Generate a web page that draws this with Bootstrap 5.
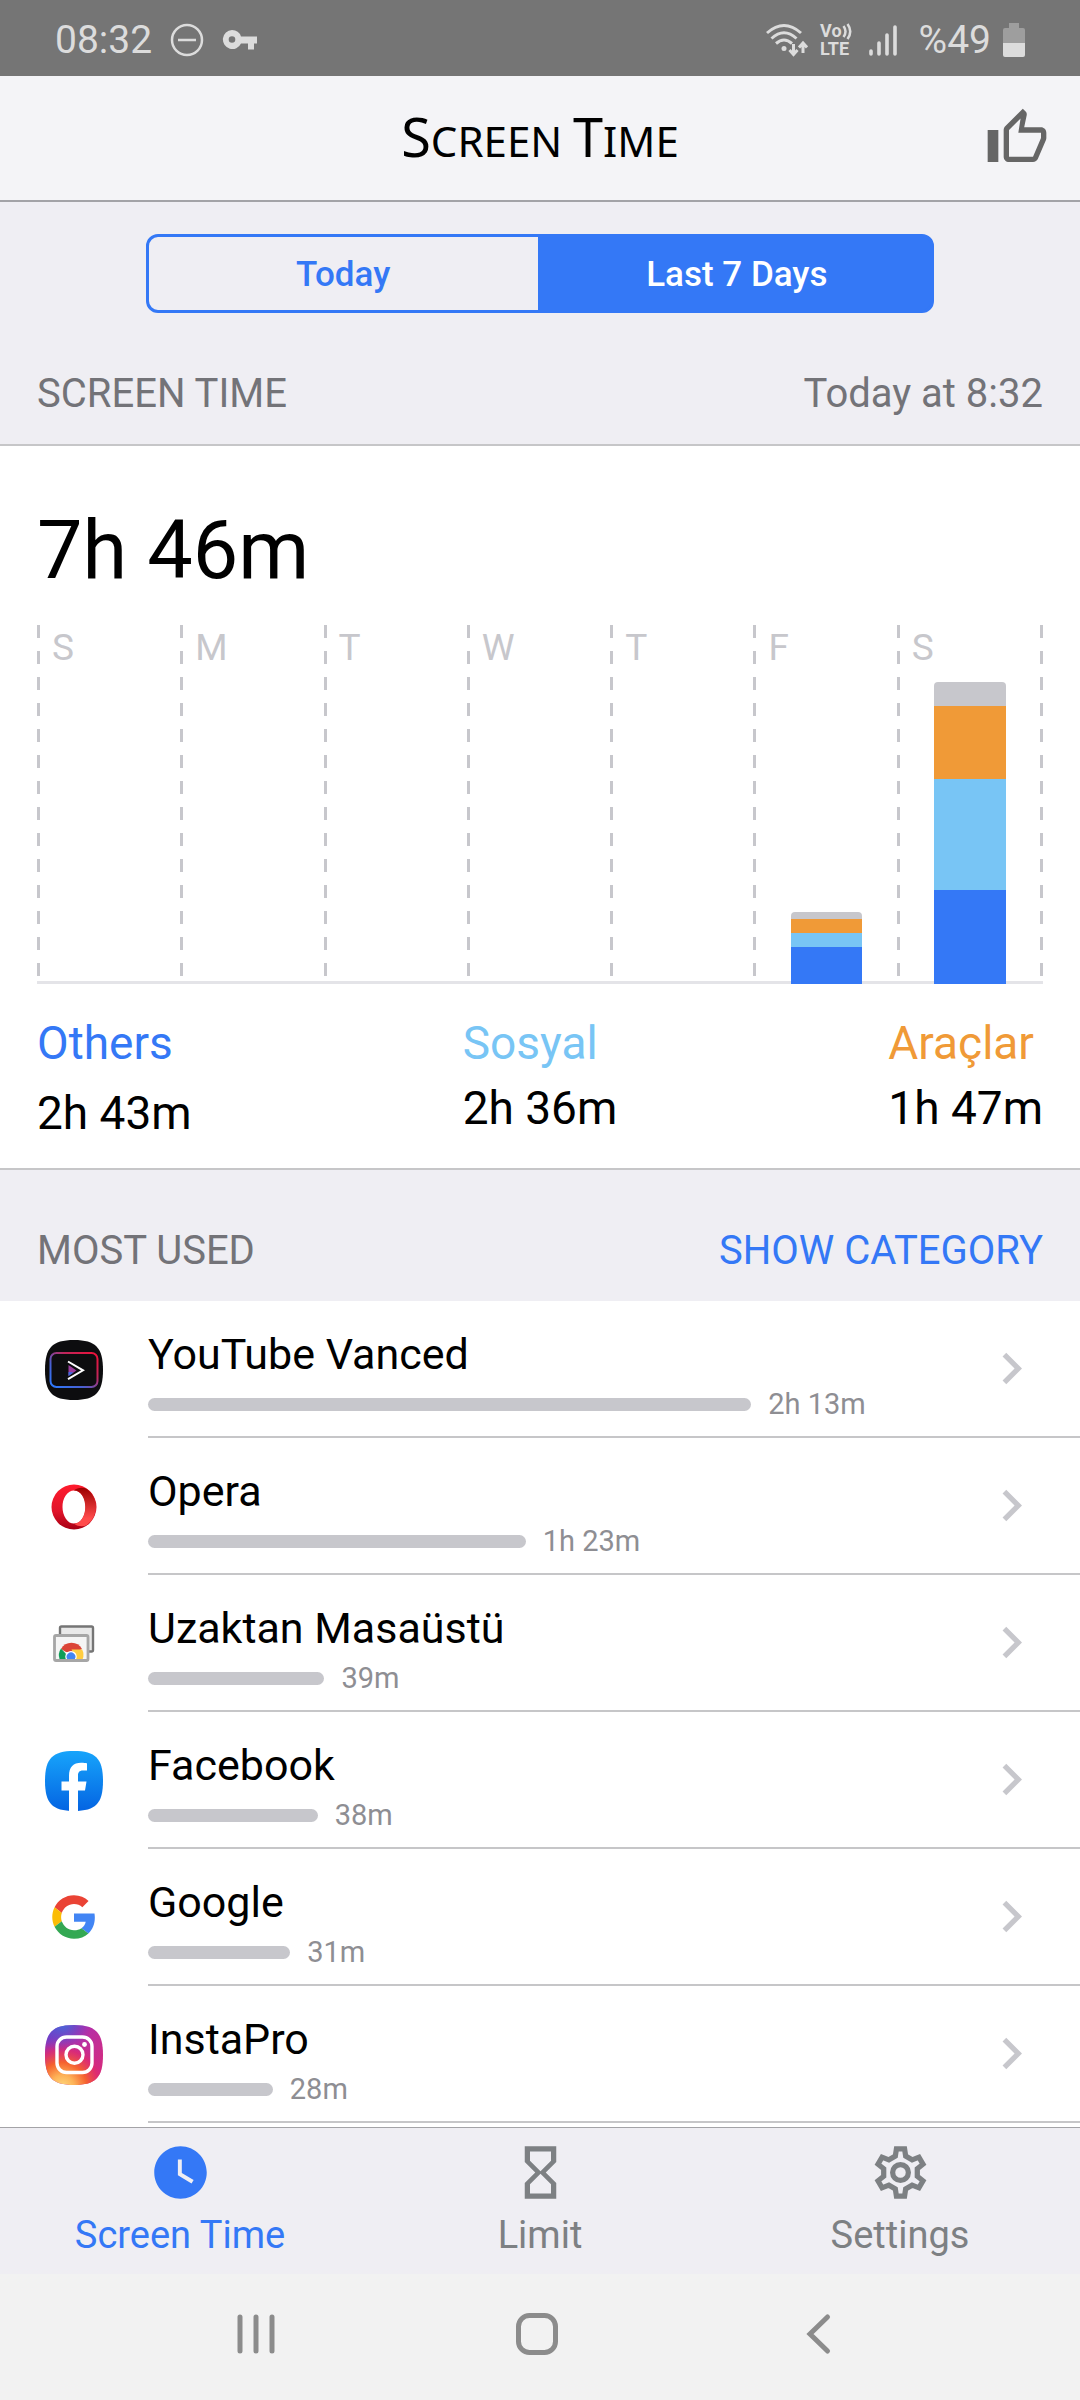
<!DOCTYPE html>
<html lang="en">
<head>
<meta charset="utf-8">
<meta name="viewport" content="width=device-width, initial-scale=1">
<title>Screen Time</title>
<link href="https://cdn.jsdelivr.net/npm/bootstrap@5.3.0/dist/css/bootstrap.min.css" rel="stylesheet">
<style>
  :root {
    --accent: #3478f6; --sky: #78c5f5; --amber: #f09a37; --silver: #c7c7cc;
    --page: #efeef3; --line: #c6c6c8; --edge: #a3a3a7; --pad: 37px;
  }
  body { font-family: Roboto, "Noto Sans", sans-serif; background: #fff; color: #000; }
  svg { display: block; flex: none; }
  button { font-family: inherit; }
  .plain-btn { border: 0; background: none; padding: 0; }

  .status-bar { background: #757575; color: #dcdcdc; font-size: 39px; line-height: 72px; padding: 4px 55px 0; }
  .status-left { gap: 18px; }
  .status-right { gap: 12px; }
  .status-signal { margin: 0 10px 0 5px; }
  .volte { font-size: 18px; line-height: 18px; font-weight: 700; }
  .title-bar { background: #f4f4f7; border-bottom: 2px solid var(--edge); min-height: 126px; padding: 0 31px; display: grid; grid-template-columns: 1fr auto 1fr; align-items: center; }
  .app-title { font-family: "Noto Sans", sans-serif; font-size: 42px; line-height: 64px; text-transform: uppercase; grid-column: 2; margin: 0; font-weight: 400; }
  .app-title span { font-size: 54px; }
  .like-btn { color: #666; justify-self: end; }

  .gray-zone { background: var(--page); }
  .range-switch { width: 73%; margin: 0 auto; }
  .range-switch .btn {
    --bs-btn-color: var(--accent); --bs-btn-border-color: var(--accent);
    --bs-btn-active-bg: var(--accent); --bs-btn-active-border-color: var(--accent); --bs-btn-active-color: #fff;
    --bs-btn-hover-bg: transparent; --bs-btn-hover-color: var(--accent); --bs-btn-hover-border-color: var(--accent);
    --bs-btn-border-width: 3px; --bs-btn-border-radius: 12px;
    flex: 1 1 0; font-size: 35px; font-weight: 500; line-height: 71px; padding: 2px 0 0;
  }
  .section-head { padding: 51px var(--pad) 20px; font-size: 40px; line-height: 60px; color: #737378; }
  .section-head h2 { font-size: inherit; line-height: inherit; font-weight: 400; margin: 0; }
  .section-head a { color: var(--accent); text-decoration: none; }

  .summary { border-top: 2px solid var(--line); border-bottom: 2px solid var(--line); padding: 55px var(--pad) 25px; }
  .total { font-size: 81px; line-height: 100px; margin: 0 0 24px; }
  .chart { height: 359px; border-bottom: 3px solid #e4e4e8; }
  .day, .chart-end {
    background: repeating-linear-gradient(var(--silver) 0 13px, transparent 13px 26px) 0 0 / 3px 351px no-repeat;
  }
  .chart-end { width: 3px; }
  .day { flex: 1 1 0; padding-left: 3px; font-size: 37px; line-height: 46px; color: var(--silver); }
  .day-name { padding-left: 12px; }
  .stack { width: 51%; margin: 0 auto -3px; border-radius: 4px 4px 0 0; overflow: hidden; }
  .seg-rest { background: var(--silver); }
  .seg-tools { background: var(--amber); }
  .seg-social { background: var(--sky); }
  .seg-others { background: var(--accent); }
  .name-others { color: var(--accent); }
  .name-social { color: var(--sky); }
  .name-tools { color: var(--amber); }
  .legend { margin-top: 29px; font-size: 46px; line-height: 60px; }
  .legend-item { display: grid; row-gap: 5px; align-content: start; }
  .legend-top { row-gap: 10px; }

  .app-row { color: #000; text-decoration: none; padding-left: 45px; }
  .app-body { margin-left: 45px; border-bottom: 2px solid var(--line); padding-right: var(--pad); }
  .app-info { padding: 28px 0 17px; }
  .app-name { font-size: 43px; line-height: 50px; margin-bottom: 10px; }
  .usage { font-size: 29px; line-height: 30px; color: #8e8e93; gap: 17px; }
  .usage-bar { height: 13px; border-radius: 7px; background: var(--silver); }
  .chev { color: var(--silver); }

  .tab-bar { background: var(--page); border-top: 1px solid var(--edge); }
  .tab-bar a { flex: 1 1 0; color: #7d8083; text-decoration: none; font-size: 38px; line-height: 44px; padding: 13px 0 17px; gap: 9px; }
  .tab-bar a.current { color: var(--accent); }
  .system-nav { background: #f2f2f2; padding: 38px 122px 44px 115px; }
  .system-nav button { flex: 1 1 0; display: flex; justify-content: center; }
</style>
<script src="https://cdn.jsdelivr.net/npm/bootstrap@5.3.0/dist/js/bootstrap.bundle.min.js"></script>
</head>
<body class="d-flex flex-column min-vh-100">

<div class="status-bar d-flex align-items-center justify-content-between">
  <div class="status-left d-flex align-items-center">
    <span>08:32</span>
    <svg width="34" height="34" viewBox="0 0 34 34" fill="none" stroke="currentColor" stroke-width="2.5"><circle cx="17" cy="17" r="15"/><path d="M8 17h18"/></svg>
    <svg width="36" height="22" viewBox="0 0 36 22"><path fill="currentColor" fill-rule="evenodd" d="M10 1a9.5 9.5 0 0 1 9 6.500h16v7h-3v6h-6v-6h-7A9.500 9.500 0 1 1 10 1zm0 6.200a3.300 3.300 0 1 0 0 6.600 3.300 3.300 0 0 0 0-6.600z"/></svg>
  </div>
  <div class="status-right d-flex align-items-center">
    <svg width="42" height="34" viewBox="0 0 42 34" fill="none" stroke="currentColor" stroke-width="3"><path d="M1 10Q18-5 35 10M5.500 15.500Q18 4 30.500 15.500M10 20.500Q18 13.500 26 20.500"/><circle cx="18" cy="25.500" r="2.500" fill="currentColor" stroke="none"/><path d="M27.500 21v10M23.500 27l4 4.500 4-4.500M37 30V20M33 24.500l4-4.500 4 4.500"/></svg>
    <div class="volte">
      <div class="d-flex"><span>Vo</span><svg width="10" height="18" viewBox="0 0 10 18"><path d="M1.500 4q4 5.500 0 11M5.500 2q5.500 7.500 0 15" fill="none" stroke="currentColor" stroke-width="2.500"/></svg></div>
      <div>LTE</div>
    </div>
    <svg class="status-signal" width="28" height="32" viewBox="0 0 28 32" stroke="currentColor" stroke-width="3.600" stroke-linecap="round"><path d="M2 27v3M10 19v11M18 11v19M26 3v27"/></svg>
    <span>%49</span>
    <svg width="22" height="34" viewBox="0 0 22 34" fill="currentColor"><path opacity=".4" d="M6 0h10v5h4q2 0 2 2v13H0V7q0-2 2-2h4z"/><path d="M0 20h22v12q0 2-2 2H2q-2 0-2-2z"/></svg>
  </div>
</div>

<header class="title-bar">
  <h1 class="app-title"><span>S</span>creen <span>T</span>ime</h1>
  <button type="button" class="plain-btn like-btn" aria-label="Like">
    <svg width="64" height="64" viewBox="0 0 24 24" fill="currentColor"><path d="M9 21h9c.83 0 1.540-.5 1.840-1.220l3.020-7.050c.09-.23.14-.47.14-.73v-2c0-1.100-.9-2-2-2h-6.310l.95-4.570.03-.32c0-.41-.17-.79-.44-1.060L14.170 1 7.580 7.590C7.220 7.950 7 8.450 7 9v10c0 1.100.9 2 2 2zM9 9l4.340-4.340L12.500 10H21v2l-3 7H9V9zM1 9h4v12H1z"/></svg>
  </button>
</header>

<main class="flex-grow-1">
  <div class="gray-zone">
    <div class="pt-4"><div class="pt-2">
      <div class="range-switch btn-group d-flex" role="group" aria-label="Range">
        <button type="button" class="btn">Today</button>
        <button type="button" class="btn active" aria-pressed="true">Last 7 Days</button>
      </div>
    </div></div>
    <div class="section-head d-flex justify-content-between">
      <h2>SCREEN TIME</h2><span>Today at 8:32</span>
    </div>
  </div>

  <section class="summary">
    <p class="total">7h 46m</p>
    <div class="chart d-flex">
      <div class="day"><div class="day-name">S</div></div>
      <div class="day"><div class="day-name">M</div></div>
      <div class="day"><div class="day-name">T</div></div>
      <div class="day"><div class="day-name">W</div></div>
      <div class="day"><div class="day-name">T</div></div>
      <div class="day d-flex flex-column justify-content-between"><div class="day-name">F</div>
        <div class="stack">
          <div class="seg-rest" style="height:7px"></div><div class="seg-tools" style="height:14px"></div><div class="seg-social" style="height:14px"></div><div class="seg-others" style="height:37px"></div>
        </div>
      </div>
      <div class="day d-flex flex-column justify-content-between"><div class="day-name">S</div>
        <div class="stack">
          <div class="seg-rest" style="height:24px"></div><div class="seg-tools" style="height:73px"></div><div class="seg-social" style="height:111px"></div><div class="seg-others" style="height:94px"></div>
        </div>
      </div>
      <div class="chart-end"></div>
    </div>
    <div class="legend d-flex justify-content-between">
      <div class="legend-item legend-top"><span class="name-others">Others</span><span>2h 43m</span></div>
      <div class="legend-item"><span class="name-social">Sosyal</span><span>2h 36m</span></div>
      <div class="legend-item"><span class="name-tools">Araçlar</span><span>1h 47m</span></div>
    </div>
  </section>

  <div class="gray-zone section-head d-flex justify-content-between">
    <h2>MOST USED</h2><a href="#">SHOW CATEGORY</a>
  </div>

  <nav class="pb-1" aria-label="Most used apps">
    <a href="#" class="app-row d-flex align-items-center">
      <svg width="58" height="60" viewBox="0 0 58 60"><defs><linearGradient id="vg" x1="0" y1="1" x2="1" y2="0"><stop offset="0" stop-color="#2b7bff"/><stop offset=".35" stop-color="#4a5fd0"/><stop offset=".65" stop-color="#c0265a"/><stop offset="1" stop-color="#f01038"/></linearGradient></defs><path fill="#0d0d0f" d="M0 30C0 8 7 0 29 0s29 8 29 30-7 30-29 30S0 52 0 30z"/><rect x="5.500" y="13" width="47" height="34" rx="6" fill="none" stroke="url(#vg)" stroke-width="2"/><path d="M23.500 25v11l8-5.500z" fill="#9a3c9c"/><path d="M23.500 32v4l5-3.500z" fill="#3d6be0"/><path d="M23 21.500l15 8.800-15 8.800" fill="none" stroke="#fff" stroke-width="2"/></svg>
      <div class="app-body d-flex flex-grow-1 align-items-center">
        <div class="app-info flex-grow-1"><div class="app-name">YouTube Vanced</div>
          <div class="usage d-flex align-items-center"><div class="usage-bar" style="width:72.5%"></div><span>2h 13m</span></div></div>
        <svg class="chev" width="63" height="63" viewBox="0 0 24 24" fill="currentColor"><path d="M10 6 8.590 7.410 13.170 12l-4.580 4.590L10 18l6-6z"/></svg>
      </div>
    </a>
    <a href="#" class="app-row d-flex align-items-center">
      <svg width="58" height="60" viewBox="0 0 58 60"><defs><linearGradient id="o1" x1="0" y1="0" x2="0" y2="1"><stop offset="0" stop-color="#ff1b2d"/><stop offset=".6" stop-color="#e0142a"/><stop offset="1" stop-color="#a70014"/></linearGradient><linearGradient id="o2" x1="0" y1="0" x2="0" y2="1"><stop offset="0" stop-color="#9c0000"/><stop offset=".8" stop-color="#ff4b4b"/></linearGradient></defs><path fill="url(#o1)" fill-rule="evenodd" d="M29 7.500a22.500 22.500 0 1 0 0 45 22.500 22.500 0 0 0 0-45zm0 6a11.500 16.500 0 1 1 0 33 11.500 16.500 0 0 1 0-33z"/><path fill="url(#o2)" d="M29 13.500c3-3 9-3.500 13-1.500a22.500 22.500 0 0 1 0 36c-4 2-10 1.500-13-1.500 15 0 15-33 0-33z"/></svg>
      <div class="app-body d-flex flex-grow-1 align-items-center">
        <div class="app-info flex-grow-1"><div class="app-name">Opera</div>
          <div class="usage d-flex align-items-center"><div class="usage-bar" style="width:45.4%"></div><span>1h 23m</span></div></div>
        <svg class="chev" width="63" height="63" viewBox="0 0 24 24" fill="currentColor"><path d="M10 6 8.590 7.410 13.170 12l-4.580 4.590L10 18l6-6z"/></svg>
      </div>
    </a>
    <a href="#" class="app-row d-flex align-items-center">
      <svg width="58" height="60" viewBox="0 0 58 60"><rect x="15" y="12.500" width="33" height="25" rx="1.500" fill="#e9e9e9" stroke="#757575" stroke-width="2.400"/><rect x="9.500" y="21.500" width="33.500" height="25" rx="1.500" fill="#f5f5f5" stroke="#a6a6a6" stroke-width="2.800"/><path fill="#db4437" d="M16 35a12 12 0 0 1 21 0l-6 3H21z"/><path fill="#0f9d58" d="M16 34.500a12 12 0 0 0-1.500 10.500H21l1-4z"/><path fill="#ffcd40" d="M26.500 35.500h10.700a12 12 0 0 1 .5 9.500H31z"/><path fill="#fff" d="M20.800 45a5.700 5.700 0 1 1 10.400 0z"/><path fill="#4285f4" d="M22.200 45a4.400 4.400 0 1 1 7.600 0z"/></svg>
      <div class="app-body d-flex flex-grow-1 align-items-center">
        <div class="app-info flex-grow-1"><div class="app-name">Uzaktan Masaüstü</div>
          <div class="usage d-flex align-items-center"><div class="usage-bar" style="width:21.2%"></div><span>39m</span></div></div>
        <svg class="chev" width="63" height="63" viewBox="0 0 24 24" fill="currentColor"><path d="M10 6 8.590 7.410 13.170 12l-4.580 4.590L10 18l6-6z"/></svg>
      </div>
    </a>
    <a href="#" class="app-row d-flex align-items-center">
      <svg width="58" height="60" viewBox="0 0 58 60"><defs><linearGradient id="fb" x1="0" y1="0" x2="0" y2="1"><stop offset="0" stop-color="#17a4fb"/><stop offset="1" stop-color="#0464e2"/></linearGradient></defs><path fill="url(#fb)" d="M0 30C0 8 7 0 29 0s29 8 29 30-7 30-29 30S0 52 0 30z"/><path fill="#fff" d="M24 60V39.500h-7.500v-9H24V25c0-9 4.500-13.200 12-13.200 3 0 6 .5 6 .5v7.200h-4c-4 0-5 2.200-5 5v6h8.500l-1.500 9h-7V60z"/></svg>
      <div class="app-body d-flex flex-grow-1 align-items-center">
        <div class="app-info flex-grow-1"><div class="app-name">Facebook</div>
          <div class="usage d-flex align-items-center"><div class="usage-bar" style="width:20.4%"></div><span>38m</span></div></div>
        <svg class="chev" width="63" height="63" viewBox="0 0 24 24" fill="currentColor"><path d="M10 6 8.590 7.410 13.170 12l-4.580 4.590L10 18l6-6z"/></svg>
      </div>
    </a>
    <a href="#" class="app-row d-flex align-items-center">
      <svg width="58" height="60" viewBox="-8 -8 64 66"><path fill="#ea4335" d="M24 9.500c3.540 0 6.710 1.220 9.210 3.600l6.850-6.850C35.900 2.380 30.470 0 24 0 14.620 0 6.510 5.380 2.560 13.220l7.980 6.190C12.430 13.720 17.740 9.500 24 9.500z"/><path fill="#4285f4" d="M46.980 24.550c0-1.570-.15-3.090-.38-4.550H24v9.020h12.940c-.58 2.960-2.260 5.480-4.780 7.180l7.730 6c4.510-4.180 7.090-10.360 7.090-17.650z"/><path fill="#fbbc05" d="M10.530 28.590c-.48-1.450-.76-2.990-.76-4.590s.27-3.140.76-4.590l-7.980-6.190C.92 16.460 0 20.120 0 24c0 3.880.92 7.540 2.560 10.780l7.970-6.190z"/><path fill="#34a853" d="M24 48c6.480 0 11.930-2.130 15.890-5.810l-7.730-6c-2.150 1.450-4.920 2.300-8.160 2.300-6.260 0-11.570-4.220-13.470-9.910l-7.980 6.190C6.510 42.620 14.620 48 24 48z"/></svg>
      <div class="app-body d-flex flex-grow-1 align-items-center">
        <div class="app-info flex-grow-1"><div class="app-name">Google</div>
          <div class="usage d-flex align-items-center"><div class="usage-bar" style="width:17.1%"></div><span>31m</span></div></div>
        <svg class="chev" width="63" height="63" viewBox="0 0 24 24" fill="currentColor"><path d="M10 6 8.590 7.410 13.170 12l-4.580 4.590L10 18l6-6z"/></svg>
      </div>
    </a>
    <a href="#" class="app-row d-flex align-items-center">
      <svg width="58" height="60" viewBox="0 0 58 60"><defs><linearGradient id="ig0" x1="0" y1="0" x2="1" y2="1"><stop offset="0" stop-color="#5b3fd0"/><stop offset=".4" stop-color="#b52fa8"/><stop offset="1" stop-color="#e02a6e"/></linearGradient><radialGradient id="ig1" cx=".3" cy="1.050" r=".85"><stop offset="0" stop-color="#ffdc80"/><stop offset=".25" stop-color="#fdb257"/><stop offset=".5" stop-color="#f5622f"/><stop offset=".75" stop-color="#e02a6e" stop-opacity=".8"/><stop offset="1" stop-color="#c02a9c" stop-opacity="0"/></radialGradient><radialGradient id="ig2" cx=".3" cy="-.05" r=".5"><stop offset="0" stop-color="#3f72dc"/><stop offset="1" stop-color="#6a3ccc" stop-opacity="0"/></radialGradient><path id="igs" d="M0 30C0 8 7 0 29 0s29 8 29 30-7 30-29 30S0 52 0 30z"/></defs><use href="#igs" fill="url(#ig0)"/><use href="#igs" fill="url(#ig1)"/><use href="#igs" fill="url(#ig2)"/><g fill="none" stroke="#fff" stroke-width="3.400"><rect x="12" y="12" width="35" height="35.500" rx="9.500"/><circle cx="29.500" cy="29.750" r="8.500"/></g><circle cx="39.500" cy="19.500" r="2.400" fill="#fff"/></svg>
      <div class="app-body d-flex flex-grow-1 align-items-center">
        <div class="app-info flex-grow-1"><div class="app-name">InstaPro</div>
          <div class="usage d-flex align-items-center"><div class="usage-bar" style="width:15%"></div><span>28m</span></div></div>
        <svg class="chev" width="63" height="63" viewBox="0 0 24 24" fill="currentColor"><path d="M10 6 8.590 7.410 13.170 12l-4.580 4.590L10 18l6-6z"/></svg>
      </div>
    </a>
  </nav>
</main>

<nav class="tab-bar d-flex" aria-label="Main">
  <a href="#" class="current d-flex flex-column align-items-center" aria-current="page">
    <svg width="63" height="63" viewBox="0 0 24 24" fill="currentColor"><path d="M12 2C6.500 2 2 6.500 2 12s4.500 10 10 10 10-4.500 10-10S17.500 2 12 2zm4.200 14.200L11 13V7h1.500v5.200l4.500 2.700-.8 1.300z"/></svg>
    <span>Screen Time</span>
  </a>
  <a href="#" class="d-flex flex-column align-items-center">
    <svg width="63" height="63" viewBox="0 0 24 24" fill="currentColor"><path d="M6 2v6l4 4-4 4v6h12v-6l-4-4 4-4V2H6zm10 14.500V20H8v-3.500l4-4 4 4zm-4-5l-4-4V4h8v3.500l-4 4z"/></svg>
    <span>Limit</span>
  </a>
  <a href="#" class="d-flex flex-column align-items-center">
    <svg width="63" height="63" viewBox="-12 -12 24 24" fill="none" stroke="currentColor" stroke-width="2"><path d="M-1.970-6.250-1.550-9H1.550L1.970-6.250 4.430-4.830 7.020-5.840 8.570-3.160 6.400-1.420V1.420L8.570 3.160 7.020 5.840 4.430 4.830 1.970 6.250 1.550 9H-1.550L-1.970 6.250-4.430 4.830-7.020 5.840-8.570 3.160-6.400 1.420V-1.420L-8.570-3.160-7.020-5.840-4.430-4.830z"/><circle r="3"/></svg>
    <span>Settings</span>
  </a>
</nav>

<div class="system-nav d-flex align-items-center">
  <button type="button" class="plain-btn" aria-label="Recent apps"><svg width="44" height="44" viewBox="0 0 44 44" stroke="#8c8c8c" stroke-width="5" stroke-linecap="round"><path d="M6 5v34M22 5v34M38 5v34"/></svg></button>
  <button type="button" class="plain-btn" aria-label="Home"><svg width="44" height="44" viewBox="0 0 44 44" fill="none" stroke="#8c8c8c" stroke-width="5"><rect x="3.500" y="3.500" width="37" height="37" rx="11"/></svg></button>
  <button type="button" class="plain-btn" aria-label="Back"><svg width="44" height="44" viewBox="0 0 44 44" fill="none" stroke="#8c8c8c" stroke-width="5" stroke-linecap="round"><path d="M31.500 5 14 22l17.500 17"/></svg></button>
</div>
</body>
</html>
